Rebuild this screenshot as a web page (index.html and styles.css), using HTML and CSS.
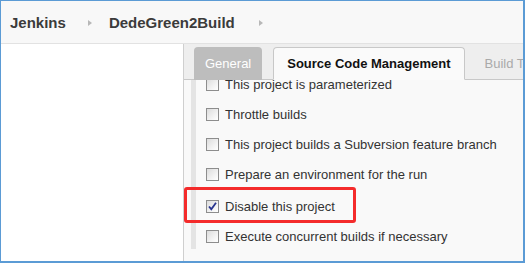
FILE: index.html
```html
<!DOCTYPE html>
<html lang="en">
<head>
    <meta charset="UTF-8">
    <meta name="viewport" content="width=device-width, initial-scale=1.0">
    <title>DedeGreen2Build Config - Jenkins</title>
    <link rel="stylesheet" href="styles.css">
</head>
<body>
    <div class="frame">
        <div class="breadcrumbs">
            <span class="crumb">Jenkins</span>
            <span class="caret"></span>
            <span class="crumb">DedeGreen2Build</span>
            <span class="caret caret-last"></span>
        </div>

        <div class="main">
            <div class="side"></div>

            <div class="config">
                <div class="tabs">
                    <div class="tab tab-dim">General</div>
                    <div class="tab tab-active">Source Code Management</div>
                    <div class="tab tab-next">Build Triggers</div>
                </div>

                <div class="section">
                    <div class="options">
                        <label class="option"><span class="box"></span>This project is parameterized</label>
                        <label class="option"><span class="box"></span>Throttle builds</label>
                        <label class="option"><span class="box"></span>This project builds a Subversion feature branch</label>
                        <label class="option"><span class="box"></span>Prepare an environment for the run</label>
                        <label class="option option-gap">
                            <span class="box">
                                <svg width="11" height="11" viewBox="0 0 11 11"><path d="M2 5.5 L4.3 8.2 L9 1.8" fill="none" stroke="#28348f" stroke-width="1.8"/></svg>
                            </span>Disable this project
                        </label>
                        <label class="option"><span class="box"></span>Execute concurrent builds if necessary</label>
                    </div>
                    <div class="highlight"></div>
                </div>
            </div>
        </div>
    </div>
</body>
</html>
```

FILE: styles.css
```css
body {
    margin: 0;
    font-family: Arial, "Liberation Sans", sans-serif;
    color: #333;
    background-color: #fff;
}

.frame {
    width: 525px;
    height: 263px;
    box-sizing: border-box;
    border: 1px solid #5b9bd5;
    border-right-width: 2px;
    border-bottom-width: 2px;
    overflow: hidden;
    display: flex;
    flex-direction: column;
}

.breadcrumbs {
    height: 42px;
    flex: none;
    background-color: #f8f8f8;
    border-bottom: 1px solid #e2e2e2;
    display: flex;
    align-items: center;
    padding-left: 9px;
}

.crumb {
    font-size: 15px;
    font-weight: bold;
    color: #3b3b3b;
}

.caret {
    width: 0;
    height: 0;
    border-top: 3px solid transparent;
    border-bottom: 3px solid transparent;
    border-left: 4px solid #b8b8b8;
    margin: 1px 17px 0 22px;
}

.caret-last {
    margin-left: 24px;
}

.main {
    flex: 1;
    display: flex;
    min-height: 0;
}

.side {
    width: 182px;
    flex: none;
    background-color: #fff;
    border-right: 1px solid #cfcfcf;
}

.config {
    flex: 1;
    display: flex;
    flex-direction: column;
    min-width: 0;
}

/* tab strip */
.tabs {
    height: 36px;
    flex: none;
    box-sizing: border-box;
    background-color: #eee;
    border-bottom: 1px solid #c8c8c8;
    display: flex;
    align-items: flex-end;
    gap: 11px;
    padding-left: 10px;
    white-space: nowrap;
}

.tab {
    height: 33px;
    box-sizing: border-box;
    display: flex;
    align-items: center;
    font-size: 13px;
    border-radius: 4px 4px 0 0;
    margin-bottom: -1px;
}

.tab-dim {
    background-color: #bdbdbd;
    color: #fff;
    padding: 0 11px;
}

.tab-active {
    background-color: #fafafa;
    border: 1px solid #c8c8c8;
    border-bottom-color: #fafafa;
    color: #111;
    font-weight: bold;
    padding: 0 13px;
}

.tab-next {
    color: #aaa;
    padding: 0 9px;
}

/* checkbox list */
.section {
    flex: 1;
    position: relative;
    background-color: #f9f9f9;
    padding-left: 7px;
    overflow: hidden;
}

.options {
    border-left: 5px solid #e4e4e4;
    margin-top: -11px;
    padding: 0 0 0 10px;
    height: 180px;
}

.option {
    display: flex;
    align-items: center;
    height: 30px;
    font-size: 13px;
    color: #333;
}

.option-gap {
    margin-top: 2px;
}

.box {
    width: 11px;
    height: 11px;
    border: 1px solid #8d8d8d;
    background: linear-gradient(135deg, #dcdcdc, #f6f6f6 70%, #fff);
    margin-right: 6px;
    display: flex;
    align-items: center;
    justify-content: center;
}

.highlight {
    position: absolute;
    left: 0;
    top: 107px;
    width: 166px;
    height: 30px;
    border: 3px solid #f42b2b;
    border-radius: 3px;
}
```
